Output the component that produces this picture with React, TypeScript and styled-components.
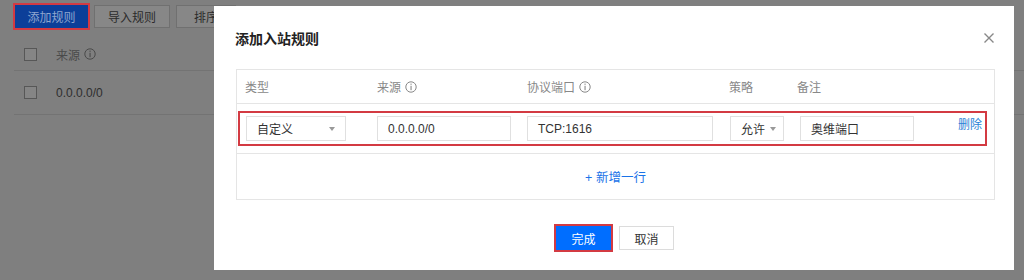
import { createGlobalStyle, styled } from 'styled-components';

const GlobalStyle = createGlobalStyle`
  html, body {
    margin: 0;
    padding: 0;
    background: #7f7f7f;
  }
  body {
    font-family: "Liberation Sans", "Noto Sans CJK SC", sans-serif;
    font-size: 12px;
  }
`;

const Page = styled.div`
  position: relative;
  width: 1024px;
  height: 280px;
  overflow: hidden;
  background: #7f7f7f;
`;

// dimmed page behind the dialog
const Toolbar = styled.div`
  display: flex;
  gap: 6px;
  padding: 5px 0 0 15px;
`;

const ToolButton = styled.button<{ $primary?: boolean; $width: number }>`
  width: ${(p) => p.$width}px;
  height: 23px;
  font: inherit;
  font-size: 12px;
  border: 1px solid ${(p) => (p.$primary ? '#0c3f99' : '#707070')};
  background: ${(p) => (p.$primary ? '#0c3f99' : '#878787')};
  color: ${(p) => (p.$primary ? '#8fa6cf' : '#2b2b2b')};
  outline: ${(p) => (p.$primary ? '2px solid #d33a42' : 'none')};
  outline-offset: 0;
  padding: 0;
`;

const BgTable = styled.div`
  margin: 10px 0 0 14px;
`;

const BgRow = styled.div<{ $height: number }>`
  display: flex;
  align-items: center;
  gap: 19px;
  height: ${(p) => p.$height}px;
  padding-left: 10px;
  border-bottom: 1px solid #737373;
  color: ${(p) => (p.$height > 40 ? '#2e2e2e' : '#4a4a4a')};
`;

const BgCheck = styled.span`
  width: 11px;
  height: 11px;
  border: 1px solid #575757;
  background: #858585;
`;

const Label = styled.span`
  display: inline-flex;
  align-items: center;
  gap: 4px;
`;

// dialog
const Dialog = styled.div`
  position: absolute;
  left: 214px;
  top: 6px;
  width: 800px;
  height: 264px;
  background: #fff;
  box-sizing: border-box;
  padding: 22px 19px 0 21px;
`;

const DialogHeader = styled.div`
  display: flex;
  align-items: center;
  justify-content: space-between;
  height: 20px;
`;

const Title = styled.h2`
  margin: 0;
  font-size: 14px;
  font-weight: bold;
  color: #222;
`;

const CloseButton = styled.button`
  border: 0;
  background: none;
  padding: 0;
  width: 12px;
  height: 12px;
  display: flex;
  cursor: pointer;
`;

const RuleTable = styled.div`
  margin: 21px 0 0 1px;
  border: 1px solid #e5e5e5;
`;

const Row = styled.div<{ $height: number }>`
  position: relative;
  display: grid;
  grid-template-columns: 132px 150px 202px 68px 1fr 50px;
  align-items: center;
  height: ${(p) => p.$height}px;
  padding-left: 8px;
  border-bottom: 1px solid #e5e5e5;

  &:last-child {
    border-bottom: 0;
  }
`;

const HeadCell = styled.div`
  color: #888;
  display: flex;
  align-items: center;
  gap: 4px;
`;

const Highlight = styled.div`
  position: absolute;
  left: 1px;
  right: 7px;
  top: 7px;
  bottom: 7px;
  border: 2px solid #d33a42;
  pointer-events: none;
`;

const Field = styled.div<{ $width: number; $shift?: number }>`
  position: relative;
  box-sizing: border-box;
  width: ${(p) => p.$width}px;
  height: 25px;
  margin-left: ${(p) => p.$shift ?? 0}px;
  border: 1px solid #e0e0e0;
  display: flex;
  align-items: center;
  padding: 0 10px;
  color: #333;
`;

const Caret = styled.span<{ $right?: number }>`
  position: absolute;
  right: ${(p) => p.$right ?? 10}px;
  top: 10px;
  width: 0;
  height: 0;
  border-left: 3.5px solid transparent;
  border-right: 3.5px solid transparent;
  border-top: 4px solid #999;
`;

const DeleteLink = styled.a`
  color: #2b7fd6;
  align-self: start;
  margin-top: 11px;
  margin-left: 14px;
`;

const AddRow = styled.div`
  height: 45px;
  display: flex;
  align-items: center;
  justify-content: center;
  color: #1a73e8;
  font-size: 12.5px;
`;

const Footer = styled.div`
  display: flex;
  justify-content: center;
  gap: 8px;
  margin-top: 26px;
`;

const ActionButton = styled.button<{ $primary?: boolean }>`
  width: 55px;
  height: 24px;
  font: inherit;
  font-size: 12px;
  padding: 0;
  border: 1px solid ${(p) => (p.$primary ? '#006eff' : '#dcdcdc')};
  background: ${(p) => (p.$primary ? '#006eff' : '#fff')};
  color: ${(p) => (p.$primary ? '#fff' : '#333')};
  outline: ${(p) => (p.$primary ? '2px solid #d33a42' : 'none')};
`;

function InfoIcon({ color }: { color: string }) {
  return (
    <svg width="12" height="12" viewBox="0 0 12 12" fill="none">
      <circle cx="6" cy="6" r="5.2" stroke={color} strokeWidth="1" />
      <rect x="5.5" y="2.6" width="1.1" height="1.2" fill={color} />
      <rect x="5.5" y="4.8" width="1.1" height="4.4" fill={color} />
    </svg>
  );
}

export default function App() {
  return (
    <Page>
      <GlobalStyle />
      <Toolbar>
        <ToolButton $primary $width={73}>添加规则</ToolButton>
        <ToolButton $width={76}>导入规则</ToolButton>
        <ToolButton $width={60}>排序</ToolButton>
      </Toolbar>
      <BgTable>
        <BgRow $height={32}>
          <BgCheck />
          <Label>
            来源 <InfoIcon color="#4a4a4a" />
          </Label>
        </BgRow>
        <BgRow $height={43}>
          <BgCheck />
          <span>0.0.0.0/0</span>
        </BgRow>
      </BgTable>

      <Dialog>
        <DialogHeader>
          <Title>添加入站规则</Title>
          <CloseButton aria-label="关闭">
            <svg width="12" height="12" viewBox="0 0 12 12">
              <path d="M1.5 1.5 L10.5 10.5 M10.5 1.5 L1.5 10.5" stroke="#888" strokeWidth="1.4" />
            </svg>
          </CloseButton>
        </DialogHeader>

        <RuleTable>
          <Row $height={33}>
            <HeadCell>类型</HeadCell>
            <HeadCell>
              来源 <InfoIcon color="#888" />
            </HeadCell>
            <HeadCell>
              协议端口 <InfoIcon color="#888" />
            </HeadCell>
            <HeadCell>策略</HeadCell>
            <HeadCell>备注</HeadCell>
            <HeadCell />
          </Row>
          <Row $height={49}>
            <Field $width={100} $shift={1}>
              自定义
              <Caret />
            </Field>
            <Field $width={134}>0.0.0.0/0</Field>
            <Field $width={186}>TCP:1616</Field>
            <Field $width={54} $shift={1}>
              允许
              <Caret $right={7} />
            </Field>
            <Field $width={114} $shift={3}>奥维端口</Field>
            <DeleteLink>删除</DeleteLink>
            <Highlight />
          </Row>
          <AddRow>+ 新增一行</AddRow>
        </RuleTable>

        <Footer>
          <ActionButton $primary>完成</ActionButton>
          <ActionButton>取消</ActionButton>
        </Footer>
      </Dialog>
    </Page>
  );
}
